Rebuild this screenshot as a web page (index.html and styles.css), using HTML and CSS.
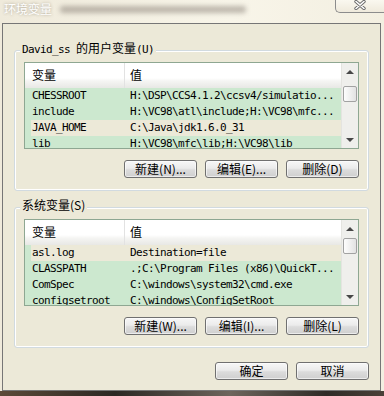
FILE: index.html
```html
<!DOCTYPE html>
<html lang="zh-CN">
<head>
    <meta charset="UTF-8">
    <meta name="viewport" content="width=device-width, initial-scale=1.0">
    <title>环境变量</title>
    <link rel="stylesheet" href="styles.css">
</head>
<body>
    <div class="titlebar">
        <span class="title">环境变量</span>
        <span class="title-blur"></span>
        <div class="close-btn">
            <svg width="12" height="10" viewBox="0 0 12 10">
                <path d="M2 1.5 L10 8.5 M10 1.5 L2 8.5" stroke="#6a6a6a" stroke-width="3.4" stroke-linecap="round"/>
                <path d="M2 1.5 L10 8.5 M10 1.5 L2 8.5" stroke="#fff" stroke-width="1.6" stroke-linecap="round"/>
            </svg>
        </div>
    </div>

    <div class="client">
        <!-- user variables -->
        <div class="group">
            <span class="group-title"><span class="mono">David_ss </span>的用户变量<span class="mono">(U)</span></span>
            <div class="list">
                <div class="list-body">
                    <div class="list-head"><span class="col-name">变量</span><span class="col-value">值</span></div>
                    <div class="row mono"><span class="col-name">CHESSROOT</span><span class="col-value">H:\DSP\CCS4.1.2\ccsv4/simulatio...</span></div>
                    <div class="row mono"><span class="col-name">include</span><span class="col-value">H:\VC98\atl\include;H:\VC98\mfc...</span></div>
                    <div class="row plain mono"><span class="col-name">JAVA_HOME</span><span class="col-value">C:\Java\jdk1.6.0_31</span></div>
                    <div class="row mono"><span class="col-name">lib</span><span class="col-value">H:\VC98\mfc\lib;H:\VC98\lib</span></div>
                </div>
                <div class="scrollbar">
                    <span class="arrow-box"><span class="arrow up"></span></span>
                    <span class="thumb" style="margin-top: 6px"></span>
                    <span class="arrow-box down-box"><span class="arrow down"></span></span>
                </div>
            </div>
            <div class="buttons">
                <button class="btn">新建(N)...</button>
                <button class="btn">编辑(E)...</button>
                <button class="btn">删除(D)</button>
            </div>
        </div>

        <!-- system variables -->
        <div class="group">
            <span class="group-title">系统变量(S)</span>
            <div class="list">
                <div class="list-body">
                    <div class="list-head"><span class="col-name">变量</span><span class="col-value">值</span></div>
                    <div class="row plain mono"><span class="col-name">asl.log</span><span class="col-value">Destination=file</span></div>
                    <div class="row mono"><span class="col-name">CLASSPATH</span><span class="col-value">.;C:\Program Files (x86)\QuickT...</span></div>
                    <div class="row mono"><span class="col-name">ComSpec</span><span class="col-value">C:\windows\system32\cmd.exe</span></div>
                    <div class="row mono"><span class="col-name">configsetroot</span><span class="col-value">C:\windows\ConfigSetRoot</span></div>
                </div>
                <div class="scrollbar">
                    <span class="arrow-box"><span class="arrow up"></span></span>
                    <span class="thumb" style="margin-top: 1px"></span>
                    <span class="arrow-box down-box"><span class="arrow down"></span></span>
                </div>
            </div>
            <div class="buttons">
                <button class="btn">新建(W)...</button>
                <button class="btn">编辑(I)...</button>
                <button class="btn">删除(L)</button>
            </div>
        </div>

        <div class="footer">
            <button class="btn">确定</button>
            <button class="btn">取消</button>
        </div>
    </div>
    <div class="frame-bottom"></div>
</body>
</html>
```

FILE: styles.css
```css
body {
    margin: 0;
    width: 384px;
    height: 396px;
    overflow: hidden;
    background: linear-gradient(to right, #efeadb, #f8f5e9 60%, #f3efe1);
    font-family: "Noto Sans CJK SC", sans-serif;
    font-size: 12px;
    color: #000;
}
.titlebar {
    display: flex;
    align-items: flex-start;
    height: 23px;
}
.title {
    color: #fff;
    padding: 2px 0 0 4px;
    line-height: 14px;
    text-shadow: 0 0 3px rgba(70, 60, 40, 0.45);
}
.title-blur {
    width: 186px;
    height: 7px;
    margin: 6px 0 0 8px;
    background: rgba(80, 70, 60, 0.35);
    filter: blur(2.5px);
    border-radius: 3px;
}
.close-btn {
    margin-left: auto;
    margin-top: -1px;
    width: 49px;
    height: 14px;
    box-sizing: border-box;
    border: 1px solid #8c8c8c;
    border-top: 0;
    border-right: 0;
    border-radius: 0 0 0 5px;
    background: linear-gradient(#fbf9f1, #efeadc);
    display: flex;
    justify-content: center;
    padding-top: 1px;
}
.client {
    width: 379px;
    height: 368px;
    margin-left: 2px;
    box-sizing: border-box;
    border: 1px solid #767676;
    background-color: #ece9d8;
    padding-left: 11px;
    overflow: hidden;
}
.group {
    position: relative;
    width: 355px;
    box-sizing: border-box;
    border: 1px solid #d1dae0;
    border-radius: 3px;
    box-shadow: inset 0 0 0 1px #fff;
    padding: 11px 9px 12px;
    margin-top: 16px;
}
.group:first-child {
    margin-top: 26px;
}
.group-title {
    position: absolute;
    top: -10px;
    left: 5px;
    padding: 0 2px;
    line-height: 14px;
    background-color: #ece9d8;
    white-space: nowrap;
}
.mono {
    font-family: "DejaVu Sans Mono", monospace;
    font-size: 11px;
    letter-spacing: -0.62px;
}
.list {
    display: flex;
    height: 87px;
    box-sizing: border-box;
    border: 1px solid #8ea792;
    background-color: #ece9d8;
}
.list-body {
    flex: 1;
    overflow: hidden;
}
.list-head {
    display: flex;
    height: 25px;
    line-height: 24px;
    background: linear-gradient(#fff 60%, #f5f5f3 72%, #e8e8e5);
}
.list-head .col-name {
    border-right: 1px solid #e2e2e2;
}
.col-name {
    width: 100px;
    flex-shrink: 0;
    box-sizing: border-box;
    padding-left: 7px;
    white-space: nowrap;
}
.col-value {
    padding-left: 5px;
    white-space: nowrap;
}
.row {
    display: flex;
    height: 16px;
    line-height: 16px;
    background-color: #cce8cf;
}
.row.plain {
    background-color: #ece9d8;
    box-shadow: inset 6px 0 #cce8cf;
}
.scrollbar {
    width: 16px;
    display: flex;
    flex-direction: column;
    align-items: center;
    background-color: #efefec;
    border-left: 1px solid #e4e4e0;
}
.arrow-box {
    height: 17px;
    display: flex;
    align-items: center;
    justify-content: center;
}
.down-box {
    margin-top: auto;
}
.arrow {
    width: 0;
    height: 0;
    border-left: 4px solid transparent;
    border-right: 4px solid transparent;
}
.arrow.up {
    border-bottom: 4px solid #474747;
}
.arrow.down {
    border-top: 4px solid #474747;
}
.thumb {
    width: 14px;
    height: 16px;
    box-sizing: border-box;
    border: 1px solid #a2a2a2;
    border-radius: 2px;
    background: linear-gradient(to right, #fdfdfd, #e2e2e2);
}
.buttons {
    display: flex;
    justify-content: flex-end;
    gap: 8px;
    margin-top: 11px;
}
.btn {
    width: 73px;
    height: 18px;
    box-sizing: border-box;
    padding: 0;
    border: 1px solid #707070;
    border-radius: 3px;
    background: linear-gradient(#f7f7f7, #ebebeb 45%, #dcdcdc 55%, #cfcfcf);
    box-shadow: inset 0 0 0 1px rgba(255, 255, 255, 0.6);
    font-family: "Noto Sans CJK SC", sans-serif;
    font-size: 12px;
    line-height: 16px;
    color: #000;
}
.footer {
    display: flex;
    justify-content: flex-end;
    gap: 8px;
    width: 355px;
    margin-top: 14px;
}
.frame-bottom {
    height: 5px;
    background: linear-gradient(to right, #5c4a38, #2b2723 30%, #6d655c 60%, #2f2b27 85%, #4a4038);
}
```
